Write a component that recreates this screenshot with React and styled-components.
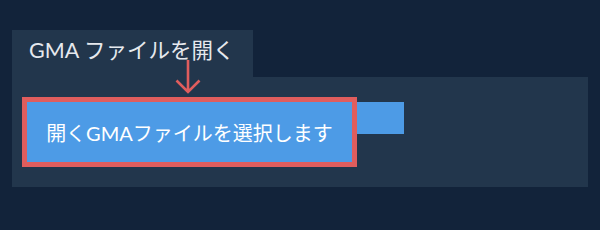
import React from "react";
import styled, { createGlobalStyle } from "styled-components";

const Global = createGlobalStyle`
  html, body { margin: 0; padding: 0; background: #12233a; }
  body { font-family: Lato, "Noto Sans CJK JP", sans-serif; }
`;

const Page = styled.div`
  width: 600px;
  height: 230px;
  box-sizing: border-box;
  padding: 30px 12px 0 12px;
  position: relative;
`;

const Tab = styled.div`
  width: 241px;
  height: 47px;
  box-sizing: border-box;
  background: #22364c;
  color: #e6e9ee;
  font-size: 21.5px;
  padding: 7px 0 0 17px;
  line-height: 26px;
  white-space: nowrap;
`;

const Panel = styled.div`
  width: 576px;
  height: 110px;
  box-sizing: border-box;
  background: #22364c;
  padding: 20px 10px;
  display: flex;
  align-items: flex-start;
`;

const Highlight = styled.div`
  width: 335px;
  height: 70px;
  box-sizing: border-box;
  border: 5px solid #e05d5d;
  background: #4d9be6;
  color: #ffffff;
  font-size: 20px;
  display: flex;
  align-items: center;
  justify-content: center;
  white-space: nowrap;
`;

const Tail = styled.div`
  width: 47px;
  height: 32px;
  margin-top: 5px;
  background: #4d9be6;
`;

const Arrow = styled.svg`
  position: absolute;
  left: 174px;
  top: 59px;
`;

export default function App() {
  return (
    <>
      <Global />
      <Page>
        <Tab>GMA ファイルを開く</Tab>
        <Panel>
          <Highlight>開くGMAファイルを選択します</Highlight>
          <Tail />
        </Panel>
        <Arrow width="30" height="36" viewBox="0 0 30 36">
          <path d="M14 1 V33 M2.5 21.5 L14 33 L25.5 21.5" fill="none" stroke="#e05d5d" strokeWidth="2.6" />
        </Arrow>
      </Page>
    </>
  );
}
